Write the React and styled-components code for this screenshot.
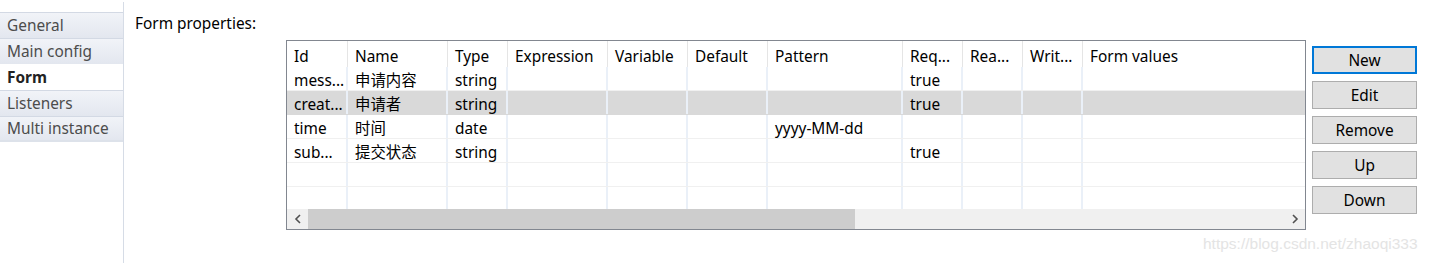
import React from "react";
import styled, { createGlobalStyle } from "styled-components";

const GlobalStyle = createGlobalStyle`
  html, body {
    margin: 0;
    padding: 0;
    background: #fff;
  }
  body {
    font-family: "Noto Sans", "Noto Sans CJK SC", sans-serif;
    font-size: 15.4px;
    color: #000;
  }
`;

const Page = styled.div`
  display: flex;
  width: 1431px;
  height: 263px;
  position: relative;
  overflow: hidden;
`;

const Sidebar = styled.div`
  width: 124px;
  padding-top: 10px;
  border-right: 1px solid #d6dce6;
  margin-top: 2px;
  box-sizing: border-box;
  flex-shrink: 0;
`;

const Tab = styled.div`
  height: 26px;
  box-sizing: border-box;
  padding-left: 7px;
  display: flex;
  align-items: center;
  font-size: 15.4px;
  color: ${(p) => (p.$active ? "#222" : "#4c4c4c")};
  font-weight: ${(p) => (p.$active ? 700 : 400)};
  background: ${(p) =>
    p.$active ? "#fff" : "linear-gradient(#f1f3f8, #e3e7ef)"};
  border-top: 1px solid ${(p) => (p.$active ? "transparent" : "#d3d9e4")};
  &:last-child {
    border-bottom: 2px solid #dde2ea;
  }
`;

const Main = styled.div`
  flex: 1;
  padding-left: 11px;
  display: flex;
  flex-direction: column;
`;

const Label = styled.div`
  height: 40px;
  line-height: 20px;
  padding-top: 14px;
  box-sizing: border-box;
`;

const Row = styled.div`
  display: flex;
  gap: 6px;
  padding-left: 151px;
`;

const TableBox = styled.div`
  width: 1020px;
  height: 190px;
  border: 1px solid #828790;
  box-sizing: border-box;
  display: flex;
  flex-direction: column;
`;

const Grid = styled.div`
  display: grid;
  grid-template-columns: 61px 100px 60px 100px 80px 80px 135px 60px 60px 60px 1fr;
`;

const HeadCell = styled.div`
  height: 26px;
  box-sizing: border-box;
  padding: 3px 0 0 7px;
  line-height: 26px;
  border-right: 1px solid #e5e5e5;
  white-space: nowrap;
  overflow: hidden;
  &:last-child {
    border-right: none;
  }
`;

const Body = styled.div`
  height: 142px;
  overflow: hidden;
`;

const DataRow = styled(Grid)`
  height: 24px;
  background: ${(p) => (p.$selected ? "#d9d9d9" : "#fff")};
  border-bottom: 1px solid ${(p) => (p.$selected ? "#d9d9d9" : "#f0f0f0")};
  box-sizing: border-box;
`;

const Cell = styled.div`
  line-height: 23px;
  padding: 2px 0 0 7px;
  box-sizing: border-box;
  border-right: 2px solid #eaf0f8;
  white-space: nowrap;
  overflow: hidden;
  &:last-child {
    border-right: none;
  }
`;

const ScrollBar = styled.div`
  height: 20px;
  background: #f0f0f0;
  display: flex;
  align-items: center;
`;

const Arrow = styled.div`
  width: 21px;
  height: 20px;
  display: flex;
  align-items: center;
  justify-content: center;
  flex-shrink: 0;
`;

const Thumb = styled.div`
  width: 547px;
  height: 20px;
  background: #cdcdcd;
`;

const Track = styled.div`
  flex: 1;
`;

const Buttons = styled.div`
  display: flex;
  flex-direction: column;
  gap: 7px;
  padding-top: 6px;
`;

const Button = styled.button`
  width: 105px;
  height: 28px;
  box-sizing: border-box;
  background: #e1e1e1;
  border: ${(p) => (p.$default ? "2px solid #0078d7" : "1px solid #adadad")};
  font-family: "Noto Sans", sans-serif;
  font-size: 15.4px;
  color: #000;
  padding: 0;
`;

const Watermark = styled.div`
  position: absolute;
  left: 1203px;
  top: 235px;
  font-family: "Liberation Sans", Arial, sans-serif;
  font-size: 15.5px;
  color: #e4e4e4;
`;

const Chevron = ({ dir }) => (
  <svg width="8" height="10" viewBox="0 0 8 10">
    <path
      d={dir === "left" ? "M6 1 L2 5 L6 9" : "M2 1 L6 5 L2 9"}
      fill="none"
      stroke="#505050"
      strokeWidth="1.6"
    />
  </svg>
);

const columns = [
  "Id", "Name", "Type", "Expression", "Variable", "Default",
  "Pattern", "Req...", "Rea...", "Writ...", "Form values",
];

const rows = [
  { id: "mess...", name: "申请内容", type: "string", pattern: "", req: "true" },
  { id: "creat...", name: "申请者", type: "string", pattern: "", req: "true", selected: true },
  { id: "time", name: "时间", type: "date", pattern: "yyyy-MM-dd", req: "" },
  { id: "sub...", name: "提交状态", type: "string", pattern: "", req: "true" },
  { id: "", name: "", type: "", pattern: "", req: "" },
  { id: "", name: "", type: "", pattern: "", req: "" },
];

export default function App() {
  return (
    <Page>
      <GlobalStyle />
      <Sidebar>
        <Tab>General</Tab>
        <Tab>Main config</Tab>
        <Tab $active>Form</Tab>
        <Tab>Listeners</Tab>
        <Tab>Multi instance</Tab>
      </Sidebar>
      <Main>
        <Label>Form properties:</Label>
        <Row>
          <TableBox>
            <Grid>
              {columns.map((c) => (
                <HeadCell key={c}>{c}</HeadCell>
              ))}
            </Grid>
            <Body>
              {rows.map((r, i) => (
                <DataRow key={i} $selected={r.selected}>
                  <Cell>{r.id}</Cell>
                  <Cell>{r.name}</Cell>
                  <Cell>{r.type}</Cell>
                  <Cell />
                  <Cell />
                  <Cell />
                  <Cell>{r.pattern}</Cell>
                  <Cell>{r.req}</Cell>
                  <Cell />
                  <Cell />
                  <Cell />
                </DataRow>
              ))}
            </Body>
            <ScrollBar>
              <Arrow><Chevron dir="left" /></Arrow>
              <Thumb />
              <Track />
              <Arrow><Chevron dir="right" /></Arrow>
            </ScrollBar>
          </TableBox>
          <Buttons>
            <Button $default>New</Button>
            <Button>Edit</Button>
            <Button>Remove</Button>
            <Button>Up</Button>
            <Button>Down</Button>
          </Buttons>
        </Row>
      </Main>
      <Watermark>https://blog.csdn.net/zhaoqi333</Watermark>
    </Page>
  );
}
